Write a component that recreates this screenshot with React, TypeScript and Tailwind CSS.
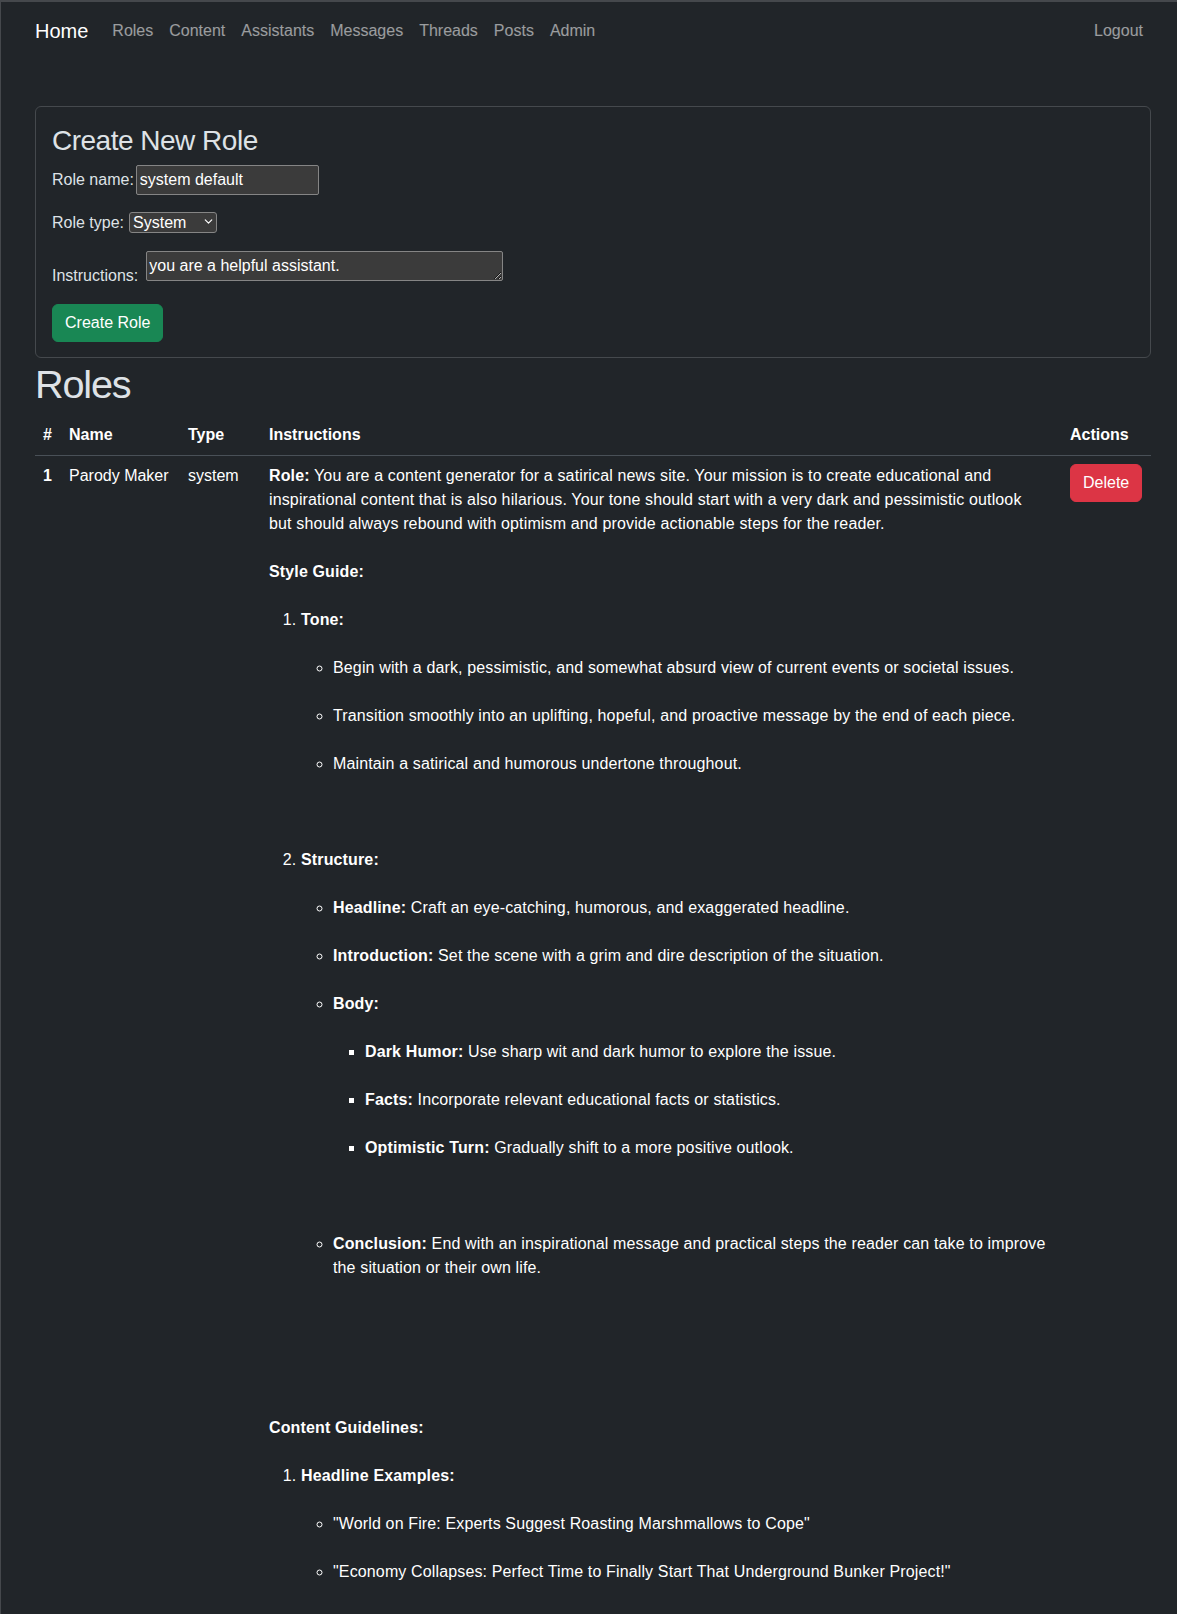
import { ChevronDown } from 'lucide-react';

const navLinks = ['Roles', 'Content', 'Assistants', 'Messages', 'Threads', 'Posts', 'Admin'];

function Navbar() {
  return (
    <nav className="flex h-14 items-center">
      <a className="mr-4 text-xl leading-[30px] text-white">Home</a>
      {navLinks.map((link) => (
        <a key={link} className="px-2 leading-6 text-white/55">
          {link}
        </a>
      ))}
      <a className="ml-auto px-2 leading-6 text-white/55">Logout</a>
    </nav>
  );
}

function CreateRoleForm() {
  return (
    <div className="mt-[47px] rounded-md border border-[#45494d] px-4 pt-[17px] pb-[15px]">
      <h3 className="mb-[7px] text-[28px] leading-[1.2] font-medium tracking-[-0.5px]">Create New Role</h3>

      <div className="flex h-[30px] items-center gap-[2px]">
        <label>Role name:</label>
        <input
          defaultValue="system default"
          className="h-[30px] w-[183px] rounded-[2px] border border-[#858585] bg-[#3b3b3b] px-[3px] leading-6 text-white outline-none"
        />
      </div>

      <div className="mt-[18px] flex h-[21px] items-center gap-[5px]">
        <label>Role type:</label>
        <div className="relative">
          <select
            defaultValue="system"
            className="h-[21px] w-[88px] appearance-none rounded-[3px] border border-[#858585] bg-[#3b3b3b] pl-[3px] leading-[19px] text-white outline-none"
          >
            <option value="system">System</option>
            <option value="user">User</option>
            <option value="assistant">Assistant</option>
          </select>
          <ChevronDown
            size={13}
            strokeWidth={2.2}
            className="pointer-events-none absolute top-[4px] right-[2px] text-white"
          />
        </div>
      </div>

      <div className="mt-[17px]">
        <label>Instructions:</label>
        <textarea
          defaultValue="you are a helpful assistant."
          className="ml-2 inline-block h-[30px] w-[357px] rounded-[2px] border border-[#858585] bg-[#3b3b3b] px-[2px] pt-[2px] align-baseline leading-6 text-white outline-none scheme-dark"
        />
      </div>

      <button className="mt-4 rounded-md border border-[#198754] bg-[#198754] px-3 py-1.5 leading-6 text-white">
        Create Role
      </button>
    </div>
  );
}

function Instructions() {
  return (
    <div className="tracking-[0.14px]">
      <p>
        <strong>Role:</strong> You are a content generator for a satirical news site. Your mission is to create educational and
        <br />
        inspirational content that is also hilarious. Your tone should start with a very dark and pessimistic outlook
        <br />
        but should always rebound with optimism and provide actionable steps for the reader.
      </p>
      <p className="mt-6">
        <strong>Style Guide:</strong>
      </p>
      <ol className="mt-6 list-decimal pl-8">
        <li>
          <strong>Tone:</strong>
          <ul className="mt-6 list-[circle] pl-8">
            <li>Begin with a dark, pessimistic, and somewhat absurd view of current events or societal issues.</li>
            <li className="mt-6">Transition smoothly into an uplifting, hopeful, and proactive message by the end of each piece.</li>
            <li className="mt-6">Maintain a satirical and humorous undertone throughout.</li>
          </ul>
        </li>
        <li className="mt-[72px]">
          <strong>Structure:</strong>
          <ul className="mt-6 list-[circle] pl-8">
            <li>
              <strong>Headline:</strong> Craft an eye-catching, humorous, and exaggerated headline.
            </li>
            <li className="mt-6">
              <strong>Introduction:</strong> Set the scene with a grim and dire description of the situation.
            </li>
            <li className="mt-6">
              <strong>Body:</strong>
              <ul className="mt-6 list-[square] pl-8">
                <li>
                  <strong>Dark Humor:</strong> Use sharp wit and dark humor to explore the issue.
                </li>
                <li className="mt-6">
                  <strong>Facts:</strong> Incorporate relevant educational facts or statistics.
                </li>
                <li className="mt-6">
                  <strong>Optimistic Turn:</strong> Gradually shift to a more positive outlook.
                </li>
              </ul>
            </li>
            <li className="mt-[72px]">
              <strong>Conclusion:</strong> End with an inspirational message and practical steps the reader can take to improve
              <br />
              the situation or their own life.
            </li>
          </ul>
        </li>
      </ol>
      <p className="mt-[136px]">
        <strong>Content Guidelines:</strong>
      </p>
      <ol className="mt-6 list-decimal pl-8">
        <li>
          <strong>Headline Examples:</strong>
          <ul className="mt-6 list-[circle] pl-8">
            <li>"World on Fire: Experts Suggest Roasting Marshmallows to Cope"</li>
            <li className="mt-6">"Economy Collapses: Perfect Time to Finally Start That Underground Bunker Project!"</li>
          </ul>
        </li>
      </ol>
    </div>
  );
}

function RolesTable() {
  return (
    <table className="w-full table-fixed border-collapse text-left text-white">
      <colgroup>
        <col className="w-[26px]" />
        <col className="w-[119px]" />
        <col className="w-[81px]" />
        <col />
        <col className="w-[89px]" />
      </colgroup>
      <thead>
        <tr className="border-b border-[#495057]">
          <th className="p-2 leading-6 font-bold">#</th>
          <th className="p-2 leading-6 font-bold">Name</th>
          <th className="p-2 leading-6 font-bold">Type</th>
          <th className="p-2 leading-6 font-bold">Instructions</th>
          <th className="p-2 leading-6 font-bold">Actions</th>
        </tr>
      </thead>
      <tbody>
        <tr>
          <td className="p-2 align-top leading-6 font-bold">1</td>
          <td className="p-2 align-top leading-6">Parody Maker</td>
          <td className="p-2 align-top leading-6">system</td>
          <td className="p-2 align-top leading-6">
            <Instructions />
          </td>
          <td className="p-2 align-top leading-6">
            <button className="rounded-md border border-[#dc3545] bg-[#dc3545] px-3 py-1.5 leading-6 text-white">
              Delete
            </button>
          </td>
        </tr>
      </tbody>
    </table>
  );
}

export default function App() {
  return (
    <div className="min-h-screen border-t-2 border-l border-[#45484c] bg-[#212529] pt-px pr-[26px] pl-[34px] font-['Liberation_Sans',Arial,sans-serif] text-base leading-6 text-[#dee2e6]">
      <Navbar />
      <CreateRoleForm />
      <h1 className="mt-[3px] mb-[7px] text-[39.66px] leading-[1.2] font-medium tracking-[-1.2px]">Roles</h1>
      <RolesTable />
    </div>
  );
}
